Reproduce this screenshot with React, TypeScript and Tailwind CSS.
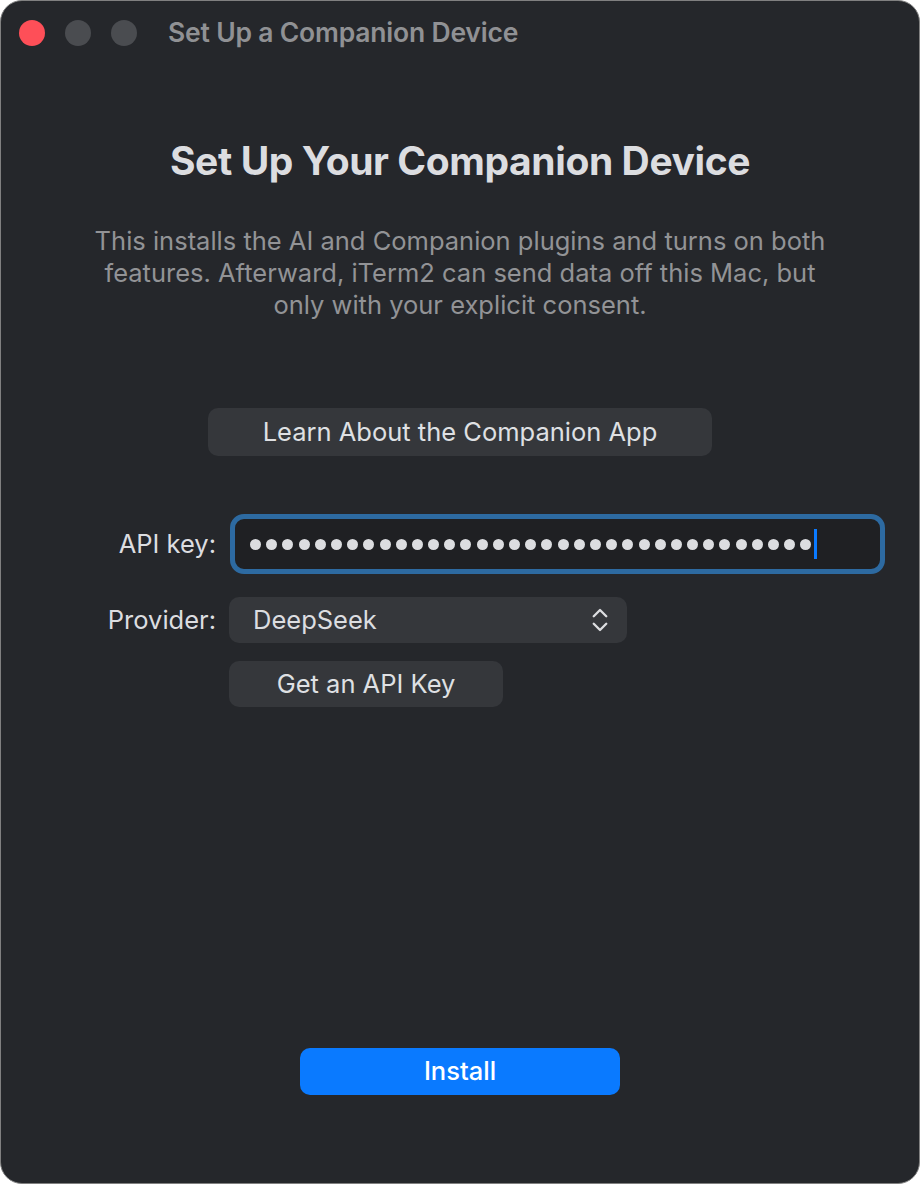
import { ChevronsUpDown } from "lucide-react";

const font = { fontFamily: "Inter, 'Noto Sans', sans-serif" };

const dots = Array.from({ length: 35 });

export default function App() {
  return (
    <div className="w-[920px] h-[1184px] bg-white" style={font}>
      <div className="w-full h-full rounded-[22px] border border-[#808080] bg-[#25272b] flex flex-col overflow-hidden">
        {/* Title bar */}
        <div className="h-[64px] flex items-center pl-[18px] shrink-0">
          <div className="flex items-center gap-[20px]">
            <span className="w-[26px] h-[26px] rounded-full bg-[#fe4f58]" />
            <span className="w-[26px] h-[26px] rounded-full bg-[#4a4c50]" />
            <span className="w-[26px] h-[26px] rounded-full bg-[#4a4c50]" />
          </div>
          <span className="ml-[31px] text-[26.5px] font-semibold text-[#909194] tracking-[-0.2px]">
            Set Up a Companion Device
          </span>
        </div>

        {/* Content */}
        <div className="flex flex-col items-center flex-1">
          <h1 className="mt-[70px] text-[39px] leading-[52px] font-bold text-[#dcdde0] tracking-[-0.4px]">
            Set Up Your Companion Device
          </h1>
          <p className="mt-[38px] text-[25.5px] leading-[32px] text-[#929396] text-center">
            This installs the AI and Companion plugins and turns on both
            <br />
            features. Afterward, iTerm2 can send data off this Mac, but
            <br />
            only with your explicit consent.
          </p>

          <button className="mt-[87px] w-[504px] h-[48px] rounded-[10px] bg-[#35373b] text-[25.5px] text-[#dfe0e3]">
            Learn About the Companion App
          </button>

          {/* Form */}
          <div className="mt-[58px] w-full grid grid-cols-[215px_1fr] gap-x-[13px] items-center pr-[34px]">
            <label className="text-right text-[25.5px] text-[#dcdde0]">API key:</label>
            <div className="ml-[1px] h-[60px] rounded-[14px] border-[5px] border-[#2d6aa1] bg-[#1f2023] flex items-center pl-[15px]">
              <div className="flex items-center gap-[5.2px]">
                {dots.map((_, i) => (
                  <span key={i} className="w-[11px] h-[11px] rounded-full bg-[#dcdde0]" />
                ))}
              </div>
              <span className="ml-[3px] w-[3px] h-[30px] bg-[#0a7aff]" />
            </div>

            <label className="mt-[23px] text-right text-[25.5px] text-[#dcdde0]">Provider:</label>
            <div className="mt-[23px] w-[398px] h-[46px] rounded-[10px] bg-[#35373b] flex items-center justify-between pl-[24px] pr-[12px]">
              <span className="text-[25.5px] text-[#dcdde0]">DeepSeek</span>
              <ChevronsUpDown className="w-[30px] h-[30px] text-[#dcdde0]" strokeWidth={1.9} />
            </div>

            <div />
            <button className="mt-[18px] w-[274px] h-[46px] rounded-[10px] bg-[#35373b] text-[25.5px] text-[#dfe0e3]">
              Get an API Key
            </button>
          </div>

          <button className="mt-auto mb-[88px] w-[320px] h-[47px] rounded-[10px] bg-[#0a7aff] text-[25.5px] text-white font-medium">
            Install
          </button>
        </div>
      </div>
    </div>
  );
}
